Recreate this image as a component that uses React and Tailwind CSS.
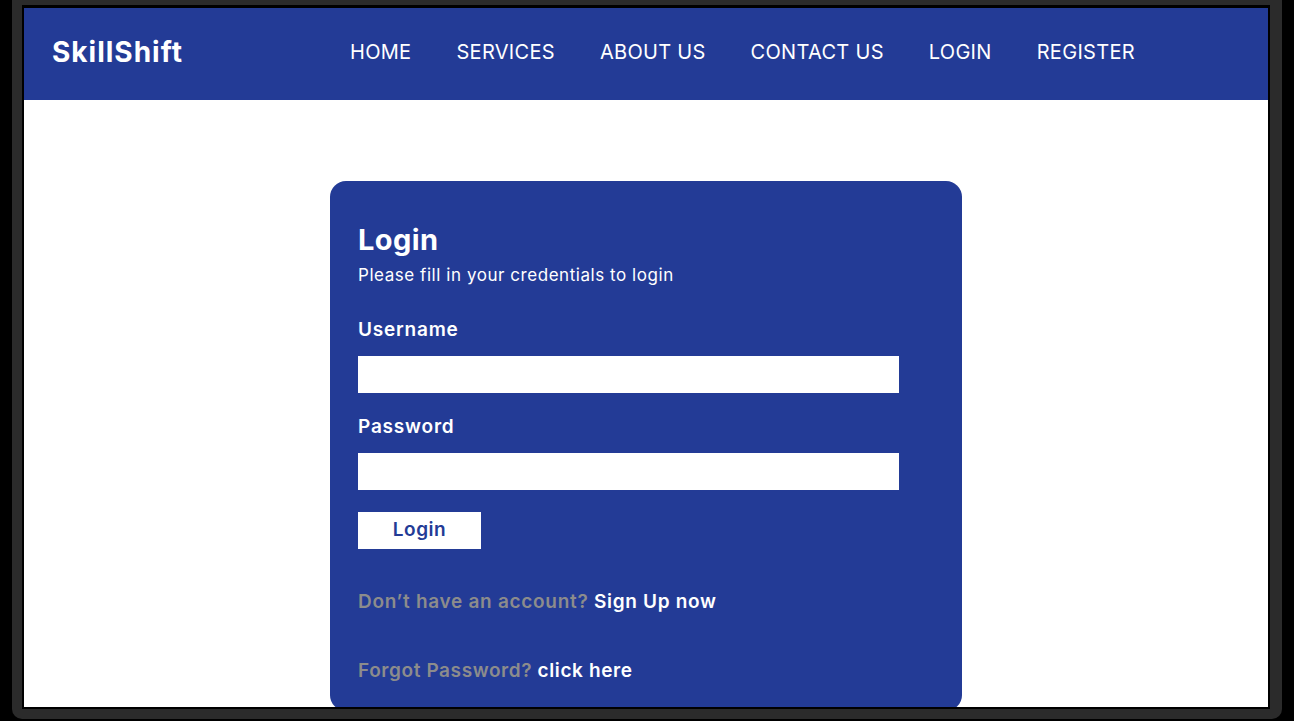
import React from "react";

const navItems = ["HOME", "SERVICES", "ABOUT US", "CONTACT US", "LOGIN", "REGISTER"];

export default function App() {
  return (
    <div className="w-[1294px] h-[721px] bg-black overflow-hidden relative" style={{ fontFamily: "Inter, 'Noto Sans', sans-serif" }}>
      <div className="ml-[12px] mr-[12px] h-[719px] bg-[#2b2b2b] rounded-b-[10px] pt-[5px] pb-[10px] pl-[10px] pr-[12px] flex flex-col">
        <div className="flex-1 border-2 border-black border-t-[3px] bg-white overflow-hidden flex flex-col">
          <header className="h-[92px] bg-[#233b96] flex items-center shrink-0 pb-[4px]">
            <div className="pl-[28px] w-[326px] text-white font-bold text-[28px] tracking-[1px]">SkillShift</div>
            <nav className="flex items-center gap-[45px] text-white text-[20px] tracking-[0.3px]">
              {navItems.map((n) => (
                <span key={n}>{n}</span>
              ))}
            </nav>
          </header>
          <main className="flex-1 flex justify-start pl-[306px] pt-[81px]">
            <div className="w-[632px] h-[530px] shrink-0 bg-[#233b96] rounded-[16px] px-[28px] pt-[40px] text-white">
              <h1 className="text-[29px] font-bold leading-[38px] tracking-[0.4px]">Login</h1>
              <p className="text-[17px] leading-[24px] mt-[4px] tracking-[0.55px]">Please fill in your credentials to login</p>
              <label className="block text-[19px] font-semibold leading-[24px] mt-[31px] tracking-[0.8px]">Username</label>
              <input className="block mt-[14px] w-[541px] h-[37px] bg-white text-black px-2 outline-none" />
              <label className="block text-[19px] font-semibold leading-[24px] mt-[22px] tracking-[0.8px]">Password</label>
              <input type="password" className="block mt-[14px] w-[541px] h-[37px] bg-white text-black px-2 outline-none" />
              <button className="block mt-[22px] w-[123px] h-[37px] bg-white text-[#233b96] text-[19px] font-semibold tracking-[0.5px]">Login</button>
              <p className="text-[19px] font-semibold leading-[24px] mt-[41px] tracking-[0.7px]">
                <span className="text-[#8c8c8c]">Don’t have an account? </span>
                <span>Sign Up now</span>
              </p>
              <p className="text-[19px] font-semibold leading-[24px] mt-[45px] tracking-[0.6px]">
                <span className="text-[#8c8c8c]">Forgot Password? </span>
                <span>click here</span>
              </p>
            </div>
          </main>
        </div>
      </div>
    </div>
  );
}
